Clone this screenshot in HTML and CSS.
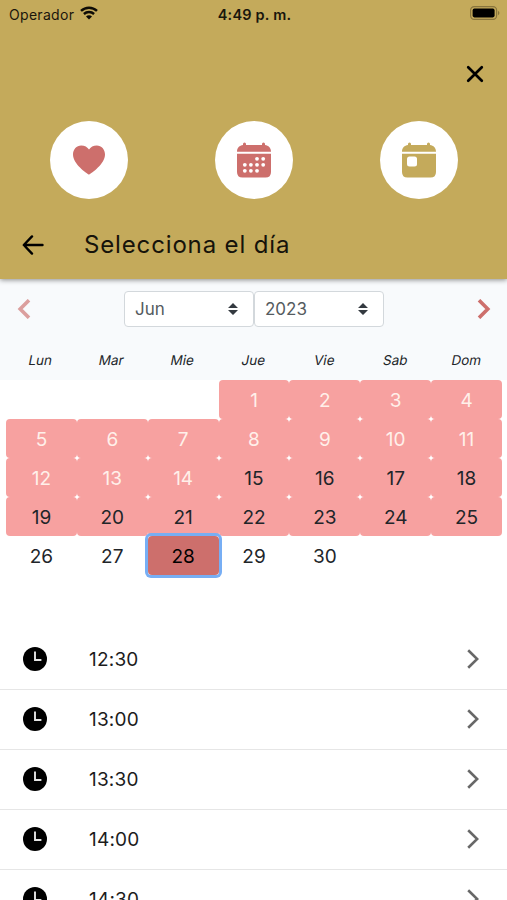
FILE: index.html
```html
<!DOCTYPE html>
<html lang="es">
<head>
    <meta charset="UTF-8">
    <meta name="viewport" content="width=device-width, initial-scale=1.0">
    <title>Selecciona el día</title>
    <link rel="stylesheet" href="styles.css">
</head>
<body>
    <!-- Shared icons -->
    <svg class="sprite">
        <symbol id="clock" viewBox="0 0 24 24">
            <circle cx="12" cy="12" r="12" fill="#000"/>
            <path d="M12 4.500V13h6.400" fill="none" stroke="#e4e4e4" stroke-width="1.900"/>
        </symbol>
        <symbol id="chevron" viewBox="0 0 12 20">
            <path d="M1.2 1.2L10.2 10L1.2 18.8" fill="none" stroke="#686868" stroke-width="2.6"/>
        </symbol>
    </svg>

    <header class="header">
        <div class="status-bar">
            <div class="carrier">
                <span>Operador</span>
                <svg class="wifi" width="18" height="14" viewBox="0 0 18 14">
                    <path d="M1 4.9C5.500 .6 12.500 .6 17 4.900M3.900 8C6.800 5.300 11.200 5.300 14.100 8" fill="none" stroke="#0d0b06" stroke-width="2.400"/>
                    <path d="M6 10.400C7.700 8.900 10.300 8.900 12 10.400L9 13.500Z" fill="#0d0b06"/>
                </svg>
            </div>
            <div class="clock-text">4:49 p. m.</div>
            <svg class="battery" width="30" height="14" viewBox="0 0 30 14">
                <rect x=".6" y=".6" width="26" height="12.800" rx="3.600" fill="none" stroke="#88753d" stroke-width="1.200"/>
                <rect x="2.600" y="2.600" width="22" height="8.800" rx="1.800" fill="#000"/>
                <path d="M28 4.800c1.900.8 1.900 3.600 0 4.400z" fill="#88753d"/>
            </svg>
        </div>

        <div class="close-row">
            <svg width="18" height="18" viewBox="0 0 18 18">
                <path d="M2.200 2.200L15.800 15.800M15.800 2.200L2.200 15.800" stroke="#000" stroke-width="2.700" stroke-linecap="round"/>
            </svg>
        </div>

        <div class="steps">
            <div class="step">
                <svg width="34" height="30" viewBox="0 0 34 30">
                    <path d="M17 29.700C14.500 28.200 1 19 1 9.500C1 4.200 4.600 .4 9.200 .4C12.600 .4 15.500 2 17 4.500C18.500 2 21.400 .4 24.800 .4C29.400 .4 33 4.200 33 9.500C33 19 19.500 28.200 17 29.700Z" fill="#cd6f6c"/>
                </svg>
            </div>
            <div class="step">
                <svg width="36" height="36" viewBox="0 0 36 36">
                    <path d="M1 9.800C1 6 3.500 3.400 7 3.100V2a1.500 1.500 0 0 1 3 0v1h16V2a1.500 1.500 0 0 1 3 0v1.100C32.500 3.400 35 6 35 9.800ZM1 11.700H35V30Q35 35.500 29.500 35.500H6.500Q1 35.500 1 30Z" fill="#cd6f6c"/>
                    <g fill="#fff">
                        <circle cx="21" cy="16.800" r="1.900"/><circle cx="27.200" cy="16.800" r="1.900"/>
                        <circle cx="8.800" cy="22.800" r="1.900"/><circle cx="14.900" cy="22.800" r="1.900"/><circle cx="21" cy="22.800" r="1.900"/><circle cx="27.200" cy="22.800" r="1.900"/>
                        <circle cx="8.800" cy="28.800" r="1.900"/><circle cx="14.900" cy="28.800" r="1.900"/><circle cx="21" cy="28.800" r="1.900"/>
                    </g>
                </svg>
            </div>
            <div class="step">
                <svg width="36" height="36" viewBox="0 0 36 36">
                    <path d="M1 9.800C1 6 3.500 3.400 7 3.100V2a1.500 1.500 0 0 1 3 0v1h16V2a1.500 1.500 0 0 1 3 0v1.100C32.500 3.400 35 6 35 9.800ZM1 11.700H35V30Q35 35.500 29.500 35.500H6.500Q1 35.500 1 30Z" fill="#c4aa5b"/>
                    <rect x="6" y="14.500" width="10" height="10" rx="2.500" fill="#fff"/>
                </svg>
            </div>
        </div>

        <div class="title-row">
            <svg width="22" height="20" viewBox="0 0 22 20">
                <path d="M10 1.400L1.800 10L10 18.600M2 10H20.500" fill="none" stroke="#000" stroke-width="2.400" stroke-linecap="round" stroke-linejoin="round"/>
            </svg>
            <h1>Selecciona el día</h1>
        </div>
    </header>

    <section class="calendar">
        <div class="calendar-head">
            <div class="month-nav">
                <svg class="prev" width="14" height="20" viewBox="0 0 14 20">
                    <path d="M12 1.200L3.200 10L12 18.800" fill="none" stroke="#cd6f6c" stroke-width="3.600"/>
                </svg>
                <div class="selects">
                    <div class="select">Jun
                        <svg width="10" height="12" viewBox="0 0 10 12"><path d="M0 5L5 0L10 5ZM0 7H10L5 12Z" fill="#343a40"/></svg>
                    </div>
                    <div class="select">2023
                        <svg width="10" height="12" viewBox="0 0 10 12"><path d="M0 5L5 0L10 5ZM0 7H10L5 12Z" fill="#343a40"/></svg>
                    </div>
                </div>
                <svg width="14" height="20" viewBox="0 0 14 20">
                    <path d="M2 1.200L10.800 10L2 18.800" fill="none" stroke="#cd6f6c" stroke-width="3.600"/>
                </svg>
            </div>
            <div class="weekdays">
                <span>Lun</span><span>Mar</span><span>Mie</span><span>Jue</span><span>Vie</span><span>Sab</span><span>Dom</span>
            </div>
        </div>
        <div class="days">
            <div class="day first busy past">1</div>
            <div class="day busy past">2</div>
            <div class="day busy past">3</div>
            <div class="day busy past">4</div>
            <div class="day busy past">5</div>
            <div class="day busy past">6</div>
            <div class="day busy past">7</div>
            <div class="day busy past">8</div>
            <div class="day busy past">9</div>
            <div class="day busy past">10</div>
            <div class="day busy past">11</div>
            <div class="day busy past">12</div>
            <div class="day busy past">13</div>
            <div class="day busy past">14</div>
            <div class="day busy">15</div>
            <div class="day busy">16</div>
            <div class="day busy">17</div>
            <div class="day busy">18</div>
            <div class="day busy">19</div>
            <div class="day busy">20</div>
            <div class="day busy">21</div>
            <div class="day busy">22</div>
            <div class="day busy">23</div>
            <div class="day busy">24</div>
            <div class="day busy">25</div>
            <div class="day">26</div>
            <div class="day">27</div>
            <div class="day-focus"><div class="day selected">28</div></div>
            <div class="day">29</div>
            <div class="day">30</div>
        </div>
    </section>

    <ul class="hours">
        <li><svg class="icon-clock"><use href="#clock"/></svg><span>12:30</span><svg class="icon-chevron"><use href="#chevron"/></svg></li>
        <li><svg class="icon-clock"><use href="#clock"/></svg><span>13:00</span><svg class="icon-chevron"><use href="#chevron"/></svg></li>
        <li><svg class="icon-clock"><use href="#clock"/></svg><span>13:30</span><svg class="icon-chevron"><use href="#chevron"/></svg></li>
        <li><svg class="icon-clock"><use href="#clock"/></svg><span>14:00</span><svg class="icon-chevron"><use href="#chevron"/></svg></li>
        <li><svg class="icon-clock"><use href="#clock"/></svg><span>14:30</span><svg class="icon-chevron"><use href="#chevron"/></svg></li>
    </ul>
</body>
</html>
```
FILE: styles.css
```css
* {
    box-sizing: border-box;
}

body {
    margin: 0;
    height: 900px;
    overflow: hidden;
    background: #fff;
    color: #212529;
    font-family: Inter, "Liberation Sans", sans-serif;
}

svg {
    display: block;
    flex: none;
}

.sprite {
    display: none;
}

/* Header */
.header {
    position: relative;
    height: 279px;
    background: #c4aa5b;
    box-shadow: 0 1px 5px rgba(0, 0, 0, 0.45);
}

.status-bar {
    display: grid;
    grid-template-columns: 1fr auto 1fr;
    align-items: center;
    height: 28px;
    padding: 0 7px 0 9px;
    font-size: 14.5px;
    color: #1a160c;
}

.carrier {
    display: flex;
    align-items: center;
    gap: 6px;
}

.carrier span {
    font-size: 14px;
    letter-spacing: 0.3px;
}

.wifi {
    margin-top: -3px;
}

.clock-text {
    font-weight: 600;
    letter-spacing: 0.2px;
}

.battery {
    justify-self: end;
    margin-top: -2px;
}

.close-row {
    display: flex;
    justify-content: flex-end;
    padding: 37px 23px 0 0;
}

.steps {
    display: flex;
    justify-content: space-between;
    padding: 38px 49px 0 50px;
}

.step {
    display: flex;
    align-items: center;
    justify-content: center;
    width: 78px;
    height: 78px;
    border-radius: 50%;
    background: #fff;
}

.title-row {
    display: flex;
    align-items: center;
    gap: 40px;
    height: 92px;
    padding-left: 22px;
}

.title-row h1 {
    margin: 0;
    padding-bottom: 2px;
    font-size: 24px;
    font-weight: 400;
    letter-spacing: 0.85px;
    color: #16130a;
}

/* Calendar */
.calendar-head {
    height: 101px;
    background: #f8fafc;
}

.month-nav {
    display: flex;
    align-items: center;
    justify-content: space-between;
    padding: 12px 16px 0 17px;
}

.prev {
    opacity: 0.65;
}

.selects {
    display: flex;
    gap: 0;
}

.select {
    display: flex;
    align-items: center;
    justify-content: space-between;
    width: 130px;
    height: 36px;
    padding: 0 15px 0 10px;
    border: 1px solid #d3d8dc;
    border-radius: 4px;
    background: #fff;
    font-size: 17px;
    color: #555b60;
}

.weekdays {
    display: grid;
    grid-template-columns: repeat(7, 1fr);
    padding: 24px 5px 0 5px;
    font-size: 13.5px;
    line-height: 18px;
    text-align: center;
}

/* slanted upright letters instead of the italic cut */
.weekdays span {
    transform: skewX(-11deg);
}

.days {
    display: grid;
    grid-template-columns: repeat(7, 1fr);
    grid-auto-rows: 39px;
    height: 250px;
    padding: 0 5px 0 6px;
}

.day {
    display: flex;
    align-items: center;
    justify-content: center;
    height: 39px;
    padding-top: 2px;
    border-radius: 4px;
    font-size: 19px;
}

.first {
    grid-column-start: 4;
}

.busy {
    background: #f7a1a0;
}

.past {
    color: #fff0ea;
}

.day-focus {
    z-index: 1;
    border-radius: 3px;
    background: #fff;
    box-shadow: 0 0 0 3px #77aef4;
}

.selected {
    background: #cd6f6c;
    color: #000;
}

/* Hours */
.hours {
    margin: 0;
    padding: 0;
    list-style: none;
}

.hours li {
    display: flex;
    align-items: center;
    height: 60px;
    padding: 0 28px 1px 23px;
    border-bottom: 1.5px solid #e6e6e6;
}

.hours span {
    flex: 1;
    margin-left: 42px;
    font-size: 19px;
    letter-spacing: 0.2px;
    color: #1c1c1c;
}

.icon-clock {
    width: 24px;
    height: 24px;
}

.icon-chevron {
    width: 12px;
    height: 20px;
}
```
